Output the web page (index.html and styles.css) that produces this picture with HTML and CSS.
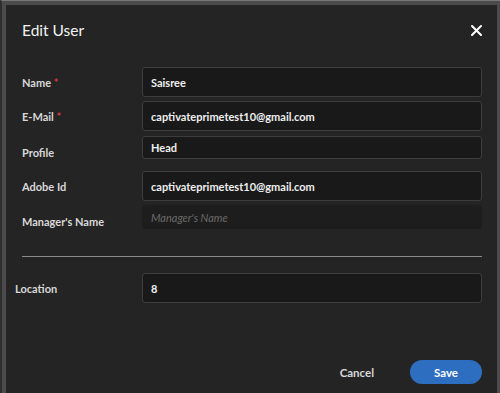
FILE: index.html
```html
<!DOCTYPE html>
<html lang="en">
<head>
  <meta charset="UTF-8" />
  <meta name="viewport" content="width=device-width, initial-scale=1.0"/>
  <title>Edit User</title>
  <link rel="stylesheet" href="styles.css">
</head>
<body>
  <div class="frame">
    <div class="dialog">
      <div class="header">
        <h1>Edit User</h1>
        <button class="close" title="Close">
          <svg width="11" height="11" viewBox="0 0 11 11"><path d="M1 1L10 10M10 1L1 10" stroke="#fff" stroke-width="2" stroke-linecap="round"/></svg>
        </button>
      </div>

      <div class="fields">
        <div class="row">
          <label>Name <span class="req">*</span></label>
          <input class="field" type="text" value="Saisree">
        </div>
        <div class="row">
          <label>E-Mail <span class="req">*</span></label>
          <input class="field" type="text" value="captivateprimetest10@gmail.com">
        </div>
        <div class="row row-short">
          <label>Profile</label>
          <input class="field" type="text" value="Head">
        </div>
        <div class="row">
          <label>Adobe Id</label>
          <input class="field" type="text" value="captivateprimetest10@gmail.com">
        </div>
        <div class="row row-plain">
          <label>Manager's Name</label>
          <input class="field plain" type="text" placeholder="Manager's Name">
        </div>
      </div>

      <hr class="divider">

      <div class="row row-location">
        <label>Location</label>
        <input class="field" type="text" value="8">
      </div>

      <div class="footer">
        <button class="cancel">Cancel</button>
        <button class="save">Save</button>
      </div>
    </div>
  </div>
</body>
</html>
```

FILE: styles.css
```css
body {
  margin: 0;
  background: #3a3a3a;
  font-family: "Lato", "Open Sans", sans-serif;
  height: 393px;
  overflow: hidden;
}
.frame {
  height: 100%;
  box-sizing: border-box;
  padding: 4px 3px 0 4px;
  background: #4b4b4b;
  border-top: 1px solid #777;
  border-left: 2px solid #2e2e2e;
}
.dialog {
  height: 100%;
  background: #242424;
  color: #e2e2e2;
  padding: 0 15px 0 16px;
  box-sizing: border-box;
}
.header {
  display: flex;
  justify-content: space-between;
  align-items: center;
  height: 50px;
  margin-bottom: 12px;
}
h1 {
  margin: 0;
  font-size: 15.5px;
  font-weight: 400;
  color: #f2f2f2;
}
.close {
  background: none;
  border: none;
  padding: 0;
  cursor: pointer;
  display: flex;
}
.fields {
  display: flex;
  flex-direction: column;
  gap: 4px;
}
.row {
  display: flex;
  align-items: center;
}
.row label {
  width: 120px;
  flex: none;
  font-size: 11px;
  font-weight: 700;
  color: #d8d8d8;
}
.req { color: #d7373f; }
.field {
  flex: 1;
  height: 30px;
  box-sizing: border-box;
  background: #191919;
  border: 1px solid #3d3d3d;
  border-radius: 3px;
  color: #efefef;
  font-family: inherit;
  font-size: 11px;
  font-weight: 700;
  padding: 0 8px;
  outline: none;
}
.row-short { margin-top: 1px; margin-bottom: 8px; }
.row-short .field { height: 23px; }
.row-short label { padding-top: 9px; }
.row-plain .field {
  height: 24px;
  border-color: #1d1d1d;
  background: #1d1d1d;
}
.row-plain label { padding-top: 8px; }
.field::placeholder {
  color: #6a6a6a;
  font-style: italic;
  font-weight: 400;
}
.divider {
  border: none;
  border-top: 1px solid #8a8a8a;
  margin: 27px 0 16px;
}
.row-location { margin-left: -7px; }
.row-location label { width: 127px; }
.footer {
  display: flex;
  justify-content: flex-end;
  align-items: center;
  gap: 30px;
  margin-top: 57px;
}
.footer button {
  font-family: inherit;
  font-size: 11.5px;
  font-weight: 700;
  border: none;
  cursor: pointer;
}
.cancel {
  background: none;
  color: #d8d8d8;
}
.save {
  background: #2d6ec0;
  color: #fff;
  width: 72px;
  height: 24px;
  border-radius: 12px;
}
```
